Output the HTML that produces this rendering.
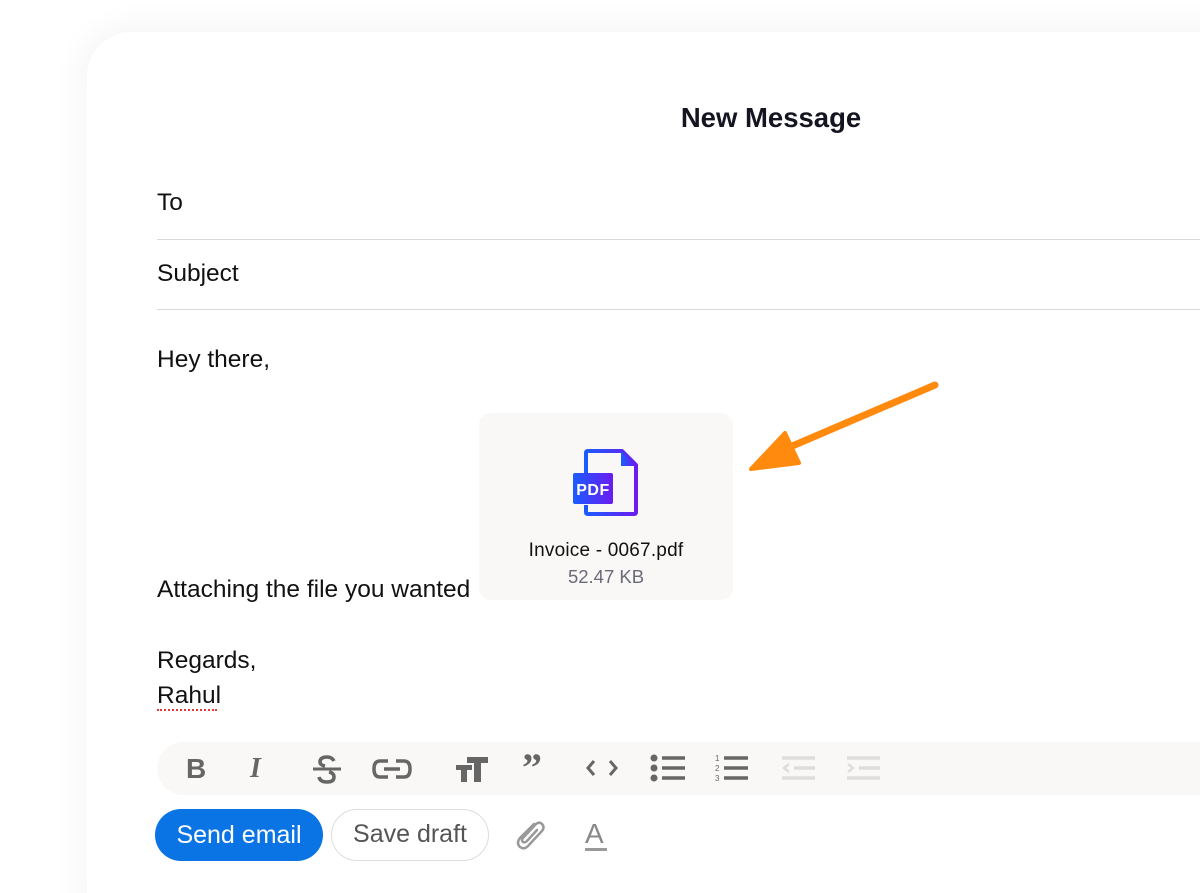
<!DOCTYPE html>
<html><head><meta charset="utf-8"><style>
*{margin:0;padding:0;box-sizing:border-box}
html,body{width:1200px;height:893px;overflow:hidden;background:#fff;font-family:"Liberation Sans",sans-serif;color:#111827}
#wrap{position:relative;width:1200px;height:893px;overflow:hidden}
.card{position:absolute;left:87px;top:32px;width:1200px;height:900px;background:#fff;border-radius:44px;box-shadow:0 0 28px 10px rgba(0,0,0,0.035)}
.abs{position:absolute}
.t{font-size:24.5px;color:#111;white-space:nowrap}
.line{position:absolute;left:157px;width:1100px;height:1px;background:#d9d9d9}
.tb{position:absolute;left:157px;top:742px;width:1100px;height:53px;background:#f9f8f7;border-radius:27px}
</style></head><body><div id="wrap">
<div class="card"></div>
<div class="abs" style="left:0;width:1542px;top:102px;text-align:center;font-weight:bold;font-size:27.5px;color:#151522">New Message</div>
<div class="abs t" style="left:157px;top:189px">To</div>
<div class="line" style="top:239px"></div>
<div class="abs t" style="left:157px;top:260px">Subject</div>
<div class="line" style="top:309px"></div>
<div class="abs t" style="left:157px;top:346px">Hey there,</div>
<div class="abs t" style="left:157px;top:576px">Attaching the file you wanted</div>
<div class="abs t" style="left:157px;top:647px">Regards,</div>
<div class="abs t" style="left:157px;top:682px">Rahul</div>
<div class="abs" style="left:157px;top:709px;width:60px;border-top:2px dotted #e53935"></div>

<div class="abs" style="left:479px;top:413px;width:254px;height:187px;background:#f9f8f7;border-radius:12px"></div>
<svg class="abs" style="left:570px;top:448px" width="72" height="70" viewBox="0 0 72 70">
<defs><linearGradient id="g" x1="0" x2="1"><stop offset="0" stop-color="#1a5cff"/><stop offset="1" stop-color="#6a1cf0"/></linearGradient></defs>
<path d="M16 25V5Q16 3 18 3H52L66 17V64Q66 66 64 66H18Q16 66 16 64V57" fill="none" stroke="url(#g)" stroke-width="4" stroke-linejoin="round"/>
<path d="M51 3V18H66" fill="url(#g)"/>
<rect x="3" y="25" width="40" height="31" rx="2" fill="url(#g)"/>
<text x="23" y="47" text-anchor="middle" font-family="Liberation Sans Narrow, Liberation Sans" font-weight="bold" font-size="16" fill="#fff" letter-spacing="0.5">PDF</text>
</svg>
<div class="abs" style="left:479px;width:254px;top:540px;text-align:center;font-size:19px;color:#111;letter-spacing:0.2px">Invoice - 0067.pdf</div>
<div class="abs" style="left:479px;width:254px;top:566px;text-align:center;font-size:18.5px;color:#6b6b78">52.47 KB</div>

<svg class="abs" style="left:745px;top:375px" width="200" height="100" viewBox="0 0 200 100">
<path d="M190 10L45 72" stroke="#ff8a0d" stroke-width="7" stroke-linecap="round"/>
<path d="M6 94L40 58L54 88Z" fill="#ff8a0d" stroke="#ff8a0d" stroke-width="4" stroke-linejoin="round"/>
</svg>

<div class="tb"></div>
<div class="abs" style="left:186px;top:753px;font-weight:bold;font-size:28px;color:#666">B</div>
<div class="abs" style="left:250px;top:753px;font-weight:bold;font-style:italic;font-size:28px;color:#666;font-family:'Liberation Serif',serif">I</div>
<svg class="abs" style="left:310px;top:752px" width="34" height="34" viewBox="0 0 34 34"><path d="M3 17H31" stroke="#666" stroke-width="3"/><path d="M24 9Q22 5 17 5Q10 5 10 10Q10 13 15 14M19 20Q24 21 24 25Q24 30 17 30Q10 30 9 25" fill="none" stroke="#666" stroke-width="3.5"/></svg>
<svg class="abs" style="left:371px;top:757px" width="42" height="24" viewBox="0 0 42 24"><path d="M17 4H9Q3 4 3 12Q3 20 9 20H17M25 4H33Q39 4 39 12Q39 20 33 20H25M13 12H29" fill="none" stroke="#666" stroke-width="3.5"/></svg>
<svg class="abs" style="left:455px;top:755px" width="34" height="28" viewBox="0 0 34 28"><path d="M12 2H33V8H26V27H19V8H12Z M1 10H17V15H12V27H6V15H1Z" fill="#666"/></svg>
<div class="abs" style="left:522px;top:748px;font-weight:bold;font-size:40px;color:#666;font-family:'Liberation Serif',serif;line-height:1">”</div>
<svg class="abs" style="left:586px;top:758px" width="32" height="20" viewBox="0 0 32 20"><path d="M8 3L2 10L8 17M24 3L30 10L24 17" fill="none" stroke="#666" stroke-width="3"/></svg>
<svg class="abs" style="left:650px;top:754px" width="36" height="28" viewBox="0 0 36 28"><circle cx="4" cy="4" r="3.5" fill="#666"/><circle cx="4" cy="14" r="3.5" fill="#666"/><circle cx="4" cy="24" r="3.5" fill="#666"/><path d="M12 4H35M12 14H35M12 24H35" stroke="#666" stroke-width="3.5"/></svg>
<svg class="abs" style="left:715px;top:754px" width="36" height="28" viewBox="0 0 36 28"><text x="0" y="7" font-size="8" fill="#666" font-family="Liberation Sans">1</text><text x="0" y="17" font-size="8" fill="#666" font-family="Liberation Sans">2</text><text x="0" y="27" font-size="8" fill="#666" font-family="Liberation Sans">3</text><path d="M9 4H33M9 14H33M9 24H33" stroke="#666" stroke-width="3.5"/></svg>
<svg class="abs" style="left:780px;top:754px" width="36" height="28" viewBox="0 0 36 28"><path d="M2 4H35M14 14H35M2 24H35" stroke="#ddd" stroke-width="3.5"/><path d="M9 10L4 14L9 18" fill="none" stroke="#ddd" stroke-width="2.5"/></svg>
<svg class="abs" style="left:845px;top:754px" width="36" height="28" viewBox="0 0 36 28"><path d="M2 4H35M14 14H35M2 24H35" stroke="#ddd" stroke-width="3.5"/><path d="M3 10L8 14L3 18" fill="none" stroke="#ddd" stroke-width="2.5"/></svg>

<div class="abs" style="left:155px;top:809px;width:168px;height:52px;border-radius:26px;background:#0b74e5;color:#fff;font-size:25px;text-align:center;line-height:52px;white-space:nowrap">Send email</div>
<div class="abs" style="left:331px;top:809px;width:158px;height:52px;border-radius:26px;border:1.5px solid #ddd;color:#555;font-size:25px;text-align:center;line-height:49px;white-space:nowrap">Save draft</div>
<svg class="abs" style="left:512px;top:818px" width="36" height="36" viewBox="0 0 36 36"><path d="M22 6L8 20Q4 25 8 29Q12 32 16 28L30 13Q33 9 30 6Q27 3 23 7L11 20Q9 22 11 24Q13 25 15 23L25 12" fill="none" stroke="#999" stroke-width="2.5" stroke-linecap="round"/></svg>
<div class="abs" style="left:585px;top:818px;font-size:28px;color:#888">A</div>
<div class="abs" style="left:585px;top:848px;width:22px;height:3px;background:#999"></div>
</div></body></html>
